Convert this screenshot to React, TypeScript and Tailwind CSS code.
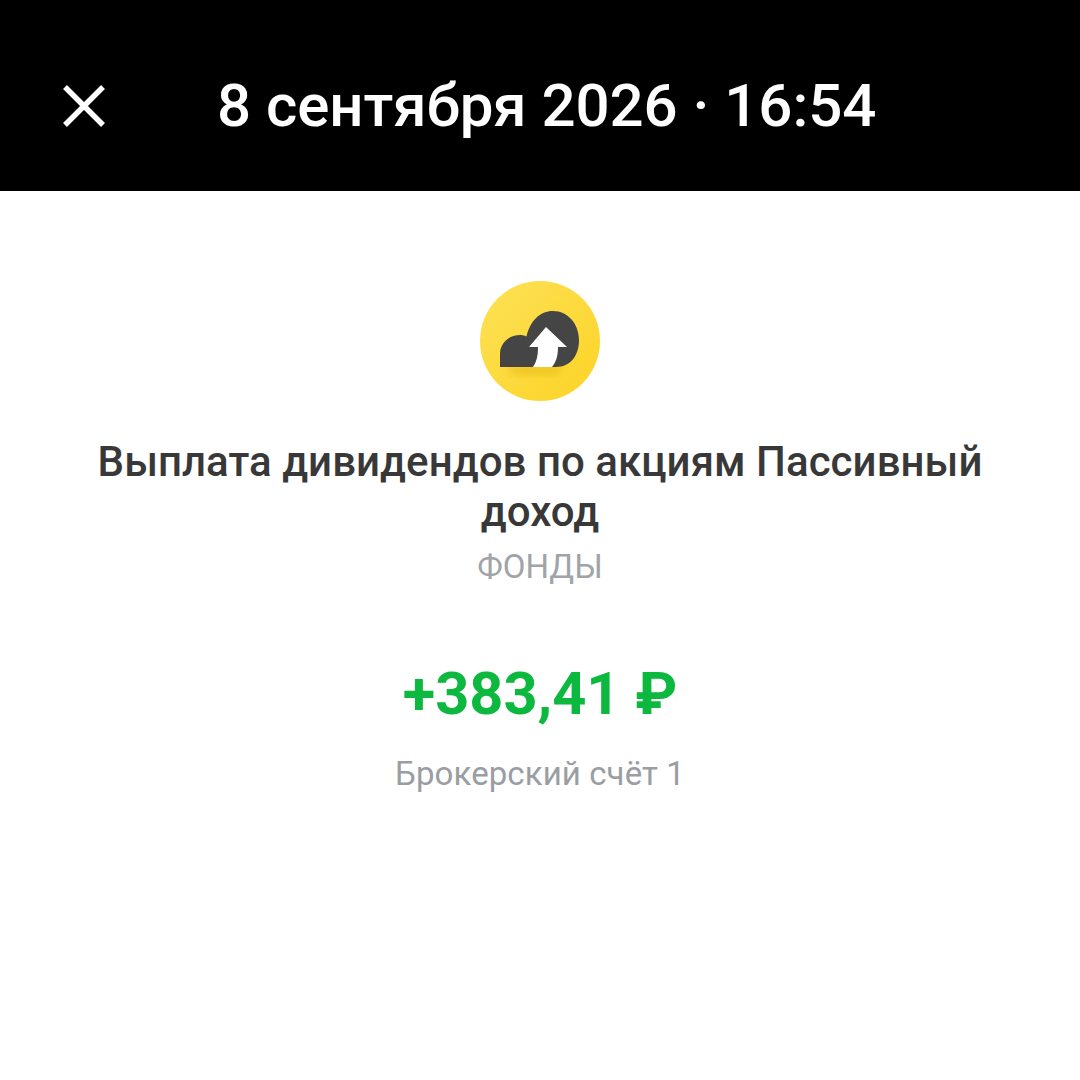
import React from 'react';

const FundIcon: React.FC = () => (
  <svg width="120" height="120" viewBox="0 0 120 120" fill="none">
    <defs>
      <linearGradient id="coin" x1="0.1" y1="0.1" x2="0.9" y2="0.9">
        <stop offset="0" stopColor="#fde052" />
        <stop offset="1" stopColor="#fcd52a" />
      </linearGradient>
      <filter id="soft" x="-30%" y="-30%" width="160%" height="160%">
        <feGaussianBlur stdDeviation="4" />
      </filter>
    </defs>
    <circle cx="60" cy="60" r="60" fill="url(#coin)" />
    <path d="M26 84 H84 L78 94 H34 Z" fill="#d8a800" fillOpacity="0.4" filter="url(#soft)" />
    <path
      d="M20 86 V73 C20 62 29 54 40 54 C42.500 54 44.500 54.500 46.500 55.500 C50 40 60 30 73 30 C88 30 99 43 99 59 C99 75 90 86 76 86 Z"
      fill="#454545"
    />
    <path
      d="M66 46 L87 66 L78 66 C78 75 76 81 72 86 L53 86 C56.500 81 58 75 58 66 L49 66 Z"
      fill="#ffffff"
    />
  </svg>
);

const App: React.FC = () => {
  return (
    <div className="flex h-[1080px] w-[1080px] flex-col overflow-hidden bg-white font-['Roboto',sans-serif]">
      <header className="flex h-[191px] items-center bg-black pl-[62px] pt-[21px]">
        <svg width="44" height="44" viewBox="0 0 44 44" fill="none" stroke="#ffffff" strokeWidth="5.500">
          <path d="M3 3 L41 41 M41 3 L3 41" />
        </svg>
        <h1 className="ml-[111px] text-[60px] font-medium leading-none tracking-[-0.05px] text-white">
          8 сентября 2026 · 16:54
        </h1>
      </header>

      <main className="flex flex-col items-center pt-[90px]">
        <FundIcon />
        <h2 className="mt-[36px] w-[900px] text-center text-[42px] font-medium leading-[50px] tracking-[0.05px] text-[#383838]">
          Выплата дивидендов по акциям Пассивный доход
        </h2>
        <p className="mt-[5px] text-[33px] leading-[50px] text-[#a0a4a9]">ФОНДЫ</p>
        <p className="mt-[67px] text-[59.5px] font-bold leading-[70px] text-[#0db83f]">+383,41 ₽</p>
        <p className="mt-[23px] text-[33px] leading-[44px] tracking-[0.1px] text-[#9a9ea3]">Брокерский счёт 1</p>
      </main>
    </div>
  );
};

export default App;
